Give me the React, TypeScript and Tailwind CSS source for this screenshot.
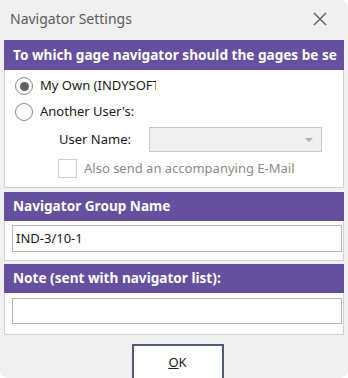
import React from "react";

const font = { fontFamily: '"Noto Sans", "Open Sans", sans-serif' };

function Radio({ checked }: { checked?: boolean }) {
  return (
    <div className="w-[18px] h-[18px] rounded-full border border-[#8c8c8c] bg-white flex items-center justify-center shrink-0">
      {checked && <div className="w-[9px] h-[9px] rounded-full bg-[#5f5f5f]" />}
    </div>
  );
}

export default function App() {
  return (
    <div className="w-[348px] h-[378px] bg-white overflow-hidden" style={font}>
      <div className="w-[348px] h-[378px] bg-[#f0f0f0] overflow-hidden rounded-tr-[8px] rounded-b-[8px] text-[#1a1a1a]">
        <div className="h-[37px] flex items-center justify-between pl-[10px] pr-[21px]">
          <span className="text-[14px] text-[#5a5a5a]">Navigator Settings</span>
          <svg width="14" height="14" viewBox="0 0 14 14">
            <path d="M1 1 L13 13 M13 1 L1 13" stroke="#666" strokeWidth="1.5" fill="none" />
          </svg>
        </div>
        <div className="mt-[3px] px-[4px] flex flex-col">
          <div className="h-[30px] bg-[#65509f] flex items-center pl-[9px]">
            <span className="w-[324px] overflow-hidden whitespace-nowrap text-white font-bold text-[13.6px]">To which gage navigator should the gages be sent?</span>
          </div>
          <div className="h-[118px] bg-white border-x border-b border-[#d2d2d2] flex flex-col pl-[10px] pt-[6px]">
            <div className="flex items-center gap-[7px] h-[20px]">
              <Radio checked />
              <span className="text-[13px] w-[116px] overflow-hidden whitespace-nowrap">My Own (INDYSOFT)</span>
            </div>
            <div className="flex items-center gap-[7px] h-[20px] mt-[6px]">
              <Radio />
              <span className="text-[13px]">Another User's:</span>
            </div>
            <div className="flex items-center mt-[5px] pl-[44px]">
              <span className="text-[13px] w-[90px]">User Name:</span>
              <div className="w-[173px] h-[25px] bg-[#f0f0f0] border border-[#c8c8c8] flex items-center justify-end pr-[8px]">
                <svg width="8" height="4" viewBox="0 0 8 4"><path d="M0 0 L8 0 L4 4 Z" fill="#b0b0b0" /></svg>
              </div>
            </div>
            <div className="flex items-center mt-[7px] pl-[43px] gap-[7px]">
              <div className="w-[19px] h-[19px] border border-[#d0d0d0] bg-white" />
              <span className="text-[13px] text-[#8a8a8a]">Also send an accompanying E-Mail</span>
            </div>
          </div>
          <div className="mt-[4px] h-[29px] bg-[#65509f] flex items-center pl-[9px]">
            <span className="text-white font-bold text-[13.6px]">Navigator Group Name</span>
          </div>
          <div className="h-[40px] bg-white border-x border-b border-[#d2d2d2] pt-[4px] pl-[7px] pr-[1px]">
            <div className="h-[27px] border border-[#b4b4b4] flex items-center pl-[3px] text-[13px]">IND-3/10-1</div>
          </div>
          <div className="mt-[3px] h-[29px] bg-[#65509f] flex items-center pl-[9px]">
            <span className="text-white font-bold text-[13.6px]">Note (sent with navigator list):</span>
          </div>
          <div className="h-[42px] bg-white border-x border-b border-[#d2d2d2] pt-[5px] pl-[7px] pr-[1px]">
            <div className="h-[26px] border border-[#b4b4b4]" />
          </div>
          <div className="flex justify-center mt-[9px] pl-[7px]">
            <div className="w-[92px] h-[40px] bg-white border-2 border-[#4f5b78] flex items-start justify-center pt-[7px] text-[13px]">
              <span><span className="underline">O</span>K</span>
            </div>
          </div>
        </div>
      </div>
    </div>
  );
}
